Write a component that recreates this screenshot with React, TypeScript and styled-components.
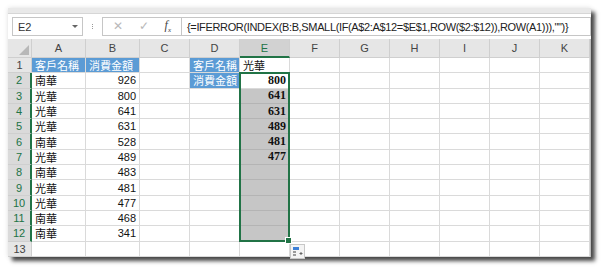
import {createGlobalStyle, styled} from 'styled-components';

const GlobalStyle = createGlobalStyle`
    html, body {
        margin: 0;
        padding: 0;
        background: #ffffff;
    }
    body {
        font-family: "Liberation Sans", "Noto Sans CJK TC", sans-serif;
    }
`;

const GREEN = '#217346';
const CJK = '"Liberation Sans", "Noto Sans CJK TC", sans-serif';

const Frame = styled.div`
    padding: 8px 14px 14px 8px;
    width: 605px;
    height: 273px;
    box-sizing: border-box;
`;

const Window = styled.div`
    width: 583px;
    background: #ffffff;
    box-shadow: 0 0 5px rgba(0, 0, 0, 0.12), 4px 4px 4px rgba(0, 0, 0, 0.7);
`;

const TopStrip = styled.div`
    height: 5px;
    background: #e9e9e9;
    border-bottom: 1px solid #d6d6d6;
`;

const FormulaBar = styled.div`
    display: flex;
    align-items: center;
    height: 25px;
    padding: 0 0 0 4px;
    background: #ffffff;
`;

const NameBox = styled.div`
    display: flex;
    align-items: center;
    justify-content: space-between;
    width: 71px;
    height: 19px;
    box-sizing: border-box;
    border: 1px solid #c6c6c6;
    padding: 0 4px 0 5px;
    font-size: 11px;
    color: #333;
`;

const Caret = styled.span`
    width: 0;
    height: 0;
    border-left: 3px solid transparent;
    border-right: 3px solid transparent;
    border-top: 3px solid #666;
`;

const Grip = styled.div`
    display: flex;
    flex-direction: column;
    gap: 1px;
    margin: 0 9px 0 9px;
    span {
        width: 1px;
        height: 1px;
        background: #999;
    }
`;

const ButtonBox = styled.div`
    display: flex;
    align-items: center;
    justify-content: space-around;
    width: 79px;
    height: 19px;
    box-sizing: border-box;
    border: 1px solid #c6c6c6;
    border-right: none;
    padding: 0 2px;
`;

const BarIcon = styled.span<{$dim?: boolean}>`
    font-size: 12px;
    color: ${(p) => (p.$dim ? '#b9b9b9' : '#444')};
    font-family: "Liberation Serif", serif;
    font-style: ${(p) => (p.$dim ? 'normal' : 'italic')};
    sub {
        font-size: 7px;
    }
`;

const FormulaInput = styled.div`
    flex: 1;
    display: flex;
    align-items: center;
    height: 19px;
    box-sizing: border-box;
    border: 1px solid #c6c6c6;
    padding-left: 5px;
    font-family: "Liberation Sans", sans-serif;
    font-size: 11px;
    letter-spacing: -0.35px;
    color: #222;
    white-space: nowrap;
    overflow: hidden;
`;

const Sheet = styled.div`
    display: grid;
    grid-template-columns: 24px 54px 54px repeat(9, 50px);
    grid-template-rows: 19px repeat(13, 15.3px);
    border-right: 1px solid #bdbdbd;
`;

const Corner = styled.div`
    grid-row: 1;
    grid-column: 1;
    background: #e6e6e6;
    border-right: 1px solid #cfcfcf;
    border-bottom: 1px solid #cfcfcf;
    display: flex;
    align-items: flex-end;
    justify-content: flex-end;
    padding: 0 2px 2px 0;
    &::after {
        content: '';
        width: 0;
        height: 0;
        border-left: 10px solid transparent;
        border-bottom: 10px solid #b8b8b8;
    }
`;

const ColHead = styled.div<{$c: number; $active?: boolean}>`
    grid-row: 1;
    grid-column: ${(p) => p.$c};
    display: flex;
    align-items: center;
    justify-content: center;
    background: ${(p) => (p.$active ? '#d2d2d2' : '#e6e6e6')};
    border-right: 1px solid #cfcfcf;
    border-bottom: ${(p) => (p.$active ? `2px solid ${GREEN}` : '1px solid #cfcfcf')};
    font-size: 11px;
    color: ${(p) => (p.$active ? GREEN : '#444')};
`;

const RowHead = styled.div<{$r: number; $active?: boolean}>`
    grid-row: ${(p) => p.$r};
    grid-column: 1;
    display: flex;
    align-items: center;
    justify-content: center;
    background: ${(p) => (p.$active ? '#dadada' : '#e6e6e6')};
    border-right: ${(p) => (p.$active ? `2px solid ${GREEN}` : '1px solid #cfcfcf')};
    border-bottom: 1px solid #cfcfcf;
    font-size: 11px;
    color: ${(p) => (p.$active ? GREEN : '#444')};
`;

const Cell = styled.div<{
    $r: number;
    $c: number;
    $fill?: string;
    $right?: boolean;
    $serif?: boolean;
    $light?: boolean;
}>`
    grid-row: ${(p) => p.$r};
    grid-column: ${(p) => p.$c};
    display: flex;
    align-items: center;
    justify-content: ${(p) => (p.$right ? 'flex-end' : 'flex-start')};
    padding: 0 3px 0 3px;
    background: ${(p) => p.$fill || '#ffffff'};
    border-right: 1px solid ${(p) => (p.$fill === '#c6c6c6' ? '#b4b4b4' : '#dadada')};
    border-bottom: 1px solid ${(p) => (p.$fill === '#c6c6c6' ? '#b4b4b4' : '#dadada')};
    font-family: ${(p) => (p.$serif ? '"Liberation Serif", serif' : CJK)};
    font-weight: ${(p) => (p.$serif ? 700 : 400)};
    font-size: ${(p) => (p.$serif ? '12px' : '11px')};
    color: ${(p) => (p.$light ? '#ffffff' : '#111')};
    white-space: nowrap;
    overflow: visible;
`;

const Selection = styled.div`
    grid-row: 3 / 14;
    grid-column: 6;
    margin: -1px 0 0 -1px;
    border: 2px solid ${GREEN};
    position: relative;
    pointer-events: none;
    z-index: 2;
`;

const FillHandle = styled.div`
    position: absolute;
    right: -4px;
    bottom: -4px;
    width: 5px;
    height: 5px;
    background: ${GREEN};
    border: 1px solid #ffffff;
`;

const QuickAnalysis = styled.div`
    position: absolute;
    right: -17px;
    bottom: -19px;
    width: 13px;
    height: 13px;
    background: #f4f4f4;
    border: 1px solid #c8c8c8;
    svg {
        display: block;
    }
`;

const BLUE = '#5b9bd5';

const colA = ['客戶名稱', '南華', '光華', '光華', '光華', '南華', '光華', '南華', '光華', '光華', '南華', '南華'];
const colB = ['消費金額', '926', '800', '641', '631', '528', '489', '483', '481', '477', '468', '341'];
const colE = ['光華', '800', '641', '631', '489', '481', '477', '', '', '', '', ''];
const letters = ['A', 'B', 'C', 'D', 'E', 'F', 'G', 'H', 'I', 'J', 'K'];

const App = () => {
    const rows = Array.from({length: 13}, (_, i) => i + 1);

    return (
        <>
            <GlobalStyle />
            <Frame>
                <Window>
                    <TopStrip />
                    <FormulaBar>
                        <NameBox>
                            E2
                            <Caret />
                        </NameBox>
                        <Grip>
                            <span />
                            <span />
                            <span />
                        </Grip>
                        <ButtonBox>
                            <BarIcon $dim>✕</BarIcon>
                            <BarIcon $dim>✓</BarIcon>
                            <BarIcon>
                                f<sub>x</sub>
                            </BarIcon>
                        </ButtonBox>
                        <FormulaInput>
                            {'{=IFERROR(INDEX(B:B,SMALL(IF(A$2:A$12=$E$1,ROW($2:$12)),ROW(A1))),"")}'}
                        </FormulaInput>
                    </FormulaBar>
                    <Sheet>
                        <Corner />
                        {letters.map((l, i) => (
                            <ColHead key={l} $c={i + 2} $active={l === 'E'}>
                                {l}
                            </ColHead>
                        ))}
                        {rows.map((r) => (
                            <RowHead key={'rh' + r} $r={r + 1} $active={r >= 2 && r <= 12}>
                                {r}
                            </RowHead>
                        ))}
                        {rows.map((r) =>
                            letters.map((l, ci) => {
                                const c = ci + 2;
                                const gr = r + 1;
                                const key = l + r;
                                if (l === 'A') {
                                    const v = colA[r - 1] || '';
                                    return (
                                        <Cell key={key} $r={gr} $c={c} $fill={r === 1 ? BLUE : undefined} $light={r === 1}>
                                            {v}
                                        </Cell>
                                    );
                                }
                                if (l === 'B') {
                                    const v = colB[r - 1] || '';
                                    return (
                                        <Cell
                                            key={key}
                                            $r={gr}
                                            $c={c}
                                            $fill={r === 1 ? BLUE : undefined}
                                            $light={r === 1}
                                            $right={r > 1}
                                        >
                                            {v}
                                        </Cell>
                                    );
                                }
                                if (l === 'D') {
                                    const v = r === 1 ? '客戶名稱' : r === 2 ? '消費金額' : '';
                                    return (
                                        <Cell key={key} $r={gr} $c={c} $fill={r <= 2 ? BLUE : undefined} $light={r <= 2}>
                                            {v}
                                        </Cell>
                                    );
                                }
                                if (l === 'E') {
                                    const v = colE[r - 1] || '';
                                    return (
                                        <Cell
                                            key={key}
                                            $r={gr}
                                            $c={c}
                                            $fill={r >= 3 && r <= 12 ? '#c6c6c6' : undefined}
                                            $right={r > 1}
                                            $serif={r > 1}
                                        >
                                            {v}
                                        </Cell>
                                    );
                                }
                                return <Cell key={key} $r={gr} $c={c} />;
                            }),
                        )}
                        <Selection>
                            <FillHandle />
                            <QuickAnalysis>
                                <svg width="13" height="13" viewBox="0 0 13 13">
                                    <rect x="2" y="2" width="6" height="3" fill="#3c7fd6" />
                                    <rect x="2" y="6" width="3" height="2" fill="#9a9a9a" />
                                    <rect x="2" y="9" width="3" height="2" fill="#9a9a9a" />
                                    <path d="M8.5 8.5h3M10 7v3" stroke="#666" strokeWidth="1" />
                                </svg>
                            </QuickAnalysis>
                        </Selection>
                    </Sheet>
                </Window>
            </Frame>
        </>
    );
};

export default App;
